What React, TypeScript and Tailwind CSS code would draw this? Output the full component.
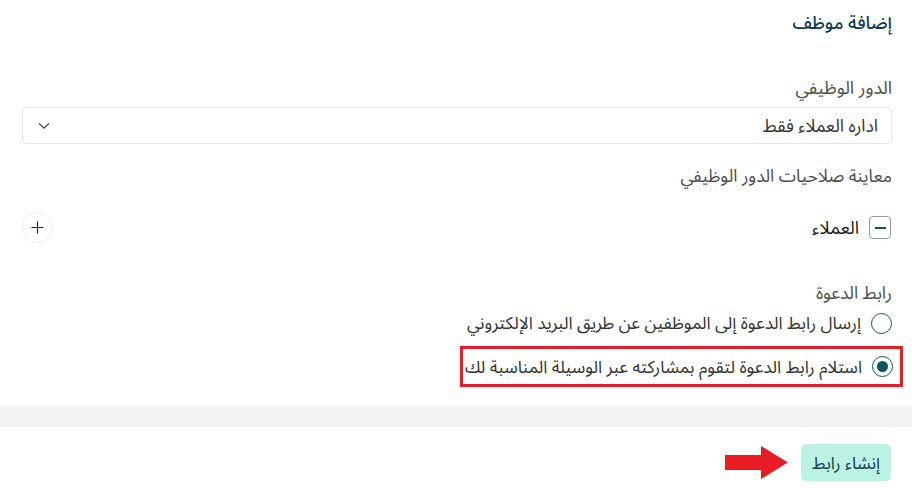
import React from "react";

export default function App() {
  return (
    <div
      dir="rtl"
      className="w-[912px] h-[488px] bg-white overflow-hidden"
      style={{ fontFamily: '"Noto Sans", "Noto Sans Arabic", "DejaVu Sans", sans-serif' }}
    >
      <div className="pr-[20px] pl-[22px]">
        <div className="pt-[10px] h-[34px] text-[18px] leading-[24px] font-medium text-[#0c3c4c]">إضافة موظف</div>

        <div className="mt-[41px] h-[24px] text-[18px] leading-[24px] text-[#4d4d4d]">الدور الوظيفي</div>

        <div className="mt-[8px] h-[37px] border border-[#e6e6e6] rounded-[4px] flex items-center justify-between pr-[13px] pl-[15px]">
          <span className="text-[17.5px] text-[#333]">اداره العملاء فقط</span>
          <svg width="12" height="8" viewBox="0 0 12 8" fill="none">
            <path d="M1 1.5 L6 6 L11 1.5" stroke="#555" strokeWidth="1.4" />
          </svg>
        </div>

        <div className="mt-[19px] h-[24px] text-[17.5px] leading-[24px] text-[#4d4d4d]">معاينة صلاحيات الدور الوظيفي</div>

        <div className="mt-[25px] h-[31px] flex items-center justify-between">
          <div className="flex items-center gap-[10px] pr-[1px]">
            <div className="w-[22px] h-[23px] border-[1.5px] border-[#86a3ab] rounded-[4px] flex items-center justify-center">
              <div className="w-[11px] h-[2px] bg-[#0d5560]" />
            </div>
            <span className="text-[18px] text-[#1a1a1a]">العملاء</span>
          </div>
          <div className="w-[31px] h-[31px] rounded-full border border-[#eeeeee] flex items-center justify-center">
            <svg width="13" height="13" viewBox="0 0 13 13">
              <path d="M6.5 0.5 V12.5 M0.5 6.5 H12.5" stroke="#222" strokeWidth="1.2" />
            </svg>
          </div>
        </div>

        <div className="mt-[37px] h-[24px] text-[17.5px] leading-[24px] text-[#4d4d4d]">رابط الدعوة</div>

        <div className="mt-[7px] h-[24px] flex items-center gap-[10px]">
          <div className="w-[21px] h-[21px] rounded-full border-[1.5px] border-[#0d5560]" />
          <span className="text-[17.3px] text-[#333]">إرسال رابط الدعوة إلى الموظفين عن طريق البريد الإلكتروني</span>
        </div>

        <div className="mt-[11px] mr-[-11px] w-fit h-[41px] border-[3px] border-[#e51f27] flex items-center gap-[10px] pr-[7px] pl-[2px]">
          <div className="w-[21px] h-[21px] rounded-full border-[1.5px] border-[#0d5560] flex items-center justify-center">
            <div className="w-[11px] h-[11px] rounded-full bg-[#0d5560]" />
          </div>
          <span className="text-[17.3px] text-[#333]">استلام رابط الدعوة لتقوم بمشاركته عبر الوسيلة المناسبة لك</span>
        </div>
      </div>

      <div className="mt-[19px] h-[21px] bg-[#f3f3f3]" />

      <div className="pr-[21px] mt-[17px] flex items-center gap-[12px]">
        <button className="w-[90px] h-[37px] rounded-[5px] bg-[#bbf2e3] text-[17px] text-[#0d3f4f]">إنشاء رابط</button>
        <svg width="64" height="33" viewBox="0 0 64 33">
          <path d="M0 9 H36 V0 L63 16.5 L36 33 V24 H0 Z" fill="#e81c24" />
        </svg>
      </div>
    </div>
  );
}
